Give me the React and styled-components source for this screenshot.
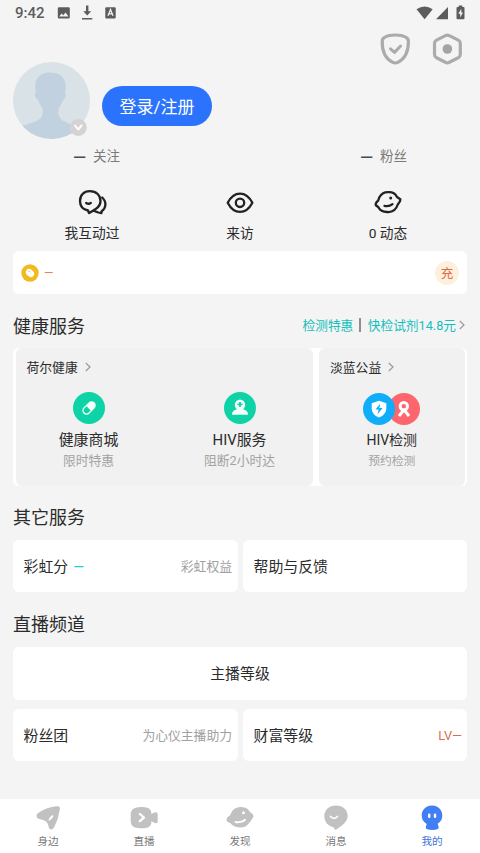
import React from "react";
import styled, { createGlobalStyle } from "styled-components";

const GlobalStyle = createGlobalStyle`
  * {
    box-sizing: border-box;
  }
  body {
    margin: 0;
    background-color: #f4f4f4;
    font-family: Roboto, "Noto Sans CJK SC", sans-serif;
    color: #2b2b2b;
  }
  svg {
    display: block;
    flex: none;
  }
`;

const Page = styled.div`
  width: 480px;
  height: 853px;
  display: flex;
  flex-direction: column;
  overflow: hidden;
  white-space: nowrap;
`;

const StatusBar = styled.div`
  height: 26px;
  padding: 0 15px;
  display: flex;
  align-items: center;
  justify-content: space-between;
  color: #5c5c5c;

  > div {
    display: flex;
    align-items: center;
  }
  .time {
    width: 42px;
    font-size: 15px;
    font-weight: 500;
    line-height: 26px;
  }
`;

const Header = styled.header`
  height: 113px;
  padding: 0 15px 0 13px;
  display: flex;
  justify-content: space-between;
`;

const Profile = styled.div`
  display: flex;
  align-items: flex-end;
  gap: 12px;
`;

const LoginButton = styled.button`
  width: 110px;
  height: 40px;
  margin-bottom: 13px;
  padding: 2px 0 0;
  border: none;
  border-radius: 20px;
  background-color: #2b73fd;
  color: #fff;
  font-family: inherit;
  font-size: 17px;
  line-height: 38px;
`;

const Actions = styled.div`
  display: flex;
  gap: 17px;
  padding-top: 5px;
`;

const Stats = styled.div`
  height: 34px;
  padding: 0 73px 2px;
  display: flex;
  justify-content: space-between;
  align-items: center;
  font-size: 13.5px;
  color: #7a7a7a;

  > div {
    display: flex;
    align-items: center;
    gap: 7px;
  }
  b {
    padding-top: 3px;
    font-size: 17px;
    line-height: 20px;
    font-weight: 500;
    color: #4b4b4b;
  }
`;

const Shortcuts = styled.div`
  height: 78px;
  padding: 13px 18px 0;
  display: grid;
  grid-template-columns: repeat(3, 1fr);
`;

const Shortcut = styled.div`
  display: flex;
  flex-direction: column;
  align-items: center;
  gap: 5px;
  font-size: 13.7px;
  line-height: 20px;
`;

const Wallet = styled.div`
  height: 43px;
  margin: 0 13px;
  padding: 0 8px;
  display: flex;
  align-items: center;
  background-color: #fff;
  border-radius: 6px;

  .amount {
    margin-left: 5px;
    font-size: 12px;
    color: #ee7a5d;
  }
`;

const Recharge = styled.span`
  width: 24px;
  height: 24px;
  margin-left: auto;
  border-radius: 50%;
  background-color: #fdf0dc;
  color: #db6a45;
  font-size: 12.5px;
  line-height: 25px;
  text-align: center;
`;

const SectionTitle = styled.div`
  height: ${(props) => props.$height}px;
  padding: ${(props) => props.$top}px 15px 0 13px;
  display: flex;
  align-items: center;
  justify-content: space-between;

  h2 {
    margin: 0;
    font-size: 18px;
    line-height: 26px;
    font-weight: 400;
  }
`;

const Promo = styled.div`
  padding-bottom: 4px;
  display: flex;
  align-items: center;
  font-size: 12.7px;
  color: #14bfbd;

  i {
    width: 1.5px;
    height: 14px;
    margin: 0 7px 0 6px;
    background-color: #8e8e8e;
  }
  svg {
    margin-left: 3px;
  }
`;

const HealthPanel = styled.div`
  height: 138px;
  margin: 0 13px;
  padding: 0 2.5px;
  display: grid;
  grid-template-columns: 297px 1fr;
  gap: 6.5px;
  background-color: #fff;
  border-radius: 6px;
`;

const HealthBox = styled.div`
  background-color: #f1f1f1;
  border-radius: 6px;

  .title {
    height: 38px;
    padding-left: 11px;
    display: flex;
    align-items: center;
    gap: 7px;
    font-size: 12.8px;
  }
  .title span {
    padding-bottom: 2px;
  }
`;

const Tiles = styled.div`
  display: flex;
  justify-content: center;
  gap: 11px;
  padding-top: ${(props) => props.$top}px;
`;

const Tile = styled.div`
  width: 140px;
  display: flex;
  flex-direction: column;
  align-items: center;

  .name {
    margin-top: 5px;
    font-size: ${(props) => (props.$small ? 14 : 14.9)}px;
    line-height: ${(props) => (props.$small ? 21 : 22)}px;
  }
  .desc {
    font-size: ${(props) => (props.$small ? 11.8 : 12.8)}px;
    line-height: 20px;
    color: #a3a3a3;
  }
`;

const CardRow = styled.div`
  margin: 0 13px ${(props) => props.$bottom || 0}px;
  display: grid;
  grid-template-columns: ${(props) => (props.$single ? "1fr" : "225px 1fr")};
  gap: 5px;
`;

const Card = styled.div`
  height: ${(props) => props.$height || 52}px;
  padding: ${(props) => (props.$center ? "0 0 2px" : "0 6px 2px 10.5px")};
  display: flex;
  align-items: center;
  justify-content: ${(props) => (props.$center ? "center" : "space-between")};
  background-color: #fff;
  border-radius: 6px;
  font-size: 14.9px;

  em {
    margin-left: 5px;
    font-style: normal;
    font-size: 14px;
    color: #22cfd0;
  }
`;

const Note = styled.span`
  font-size: 12.8px;
  color: ${(props) => props.$color || "#a0a0a0"};
`;

const Level = styled(Note)`
  padding-top: 2px;
  margin-right: -1px;
`;

const TabBar = styled.nav`
  height: 54px;
  margin-top: auto;
  display: grid;
  grid-template-columns: repeat(5, 1fr);
  background-color: #fff;
`;

const Tab = styled.div`
  padding-top: 4px;
  display: flex;
  flex-direction: column;
  align-items: center;
  font-size: 10.6px;
  line-height: 16px;
  color: ${(props) => (props.$active ? "#3f73d8" : "#777")};

  svg {
    margin-bottom: 1px;
  }
`;

const Chevron = () => (
  <svg width="6" height="10" viewBox="0 0 6 10" fill="none" stroke="#999" strokeWidth="1.2">
    <path d="M.8 1 5 5 .8 9" />
  </svg>
);

const StatusLeft = () => (
  <svg width="60" height="16" viewBox="0 0 60 16" fill="#5c5c5c">
    <path
      fillRule="evenodd"
      d="M2 2.200h9.600q1.200 0 1.200 1.200v8.800q0 1.200-1.200 1.200H2Q.8 13.400.8 12.200V3.400Q.8 2.200 2 2.200ZM2.200 11.500h9.300L8.600 7.400 6.200 10.300 4.600 8.500Z"
    />
    <path d="M29 .5h2.400v5.800h2.800l-4 4.200-4-4.200H29ZM25 13h10.300v1.600H25Z" />
    <rect x="48.300" y="2.200" width="10.400" height="11.200" rx="1" />
    <path d="m51 10.800 2.500-6.200 2.500 6.200M52 8.900h3" fill="none" stroke="#f4f4f4" strokeWidth="1.300" />
  </svg>
);

const StatusRight = () => (
  <svg width="50" height="16" viewBox="0 0 50 16" fill="#5c5c5c">
    <path d="M1.500 4.200Q9.600-1.200 17.700 4.200L9.600 14.200Z" />
    <path d="M33 2v12.200H21Z" />
    <path
      fillRule="evenodd"
      d="M43.700.5h3.600v1.600h1.200q1 0 1 1v10.200q0 1-1 1h-6q-1 0-1-1V3.100q0-1 1-1h1.200ZM46.300 3.800 43.300 8.800h1.900v3.800L48 7.500h-1.700Z"
    />
  </svg>
);

const Avatar = () => (
  <svg width="77" height="77" viewBox="0 0 77 77">
    <defs>
      <clipPath id="avatar">
        <circle cx="38.500" cy="38.500" r="38.500" />
      </clipPath>
    </defs>
    <g clipPath="url(#avatar)">
      <rect width="77" height="77" fill="#d9e2e7" />
      <path
        fill="#c2d1df"
        d="M22.500 35Q21 32 23 30C20 17 27 10 38 10.500C49 11 55 18 52 31Q54 33 51.500 36.500Q51 38 50 38C48 43 46 45 45.500 48C44 58 52 60 65 65V77H9V64C25 59 31 58 29.500 47C28 44 26 41 25 37.500Q23 37 22.500 35Z"
      />
    </g>
    <circle cx="65.300" cy="65.500" r="8.500" fill="#d5d2d5" />
    <path d="m62 63.500 3.200 4 3.400-4" fill="none" stroke="#fff" strokeWidth="2" strokeLinecap="round" strokeLinejoin="round" />
  </svg>
);

const ShieldIcon = () => (
  <svg width="35" height="36" viewBox="0 0 35 36" fill="none" stroke="#ababab" strokeLinecap="round" strokeLinejoin="round">
    <path strokeWidth="3.200" d="M17.300 4C12.500 4 8 5 5.600 7Q4.200 8.200 4.200 10.500C4 21 8 28 14.800 31.400Q17.300 32.600 19.800 31.400C26.500 28 30.500 21 30.400 10.500Q30.400 8.200 29 7C26.500 5 22 4 17.300 4Z" />
    <path strokeWidth="3" d="m12.500 17.800 4 3.600L22.600 15" />
  </svg>
);

const HexIcon = () => (
  <svg width="35" height="36" viewBox="0 0 35 36">
    <path
      fill="none"
      stroke="#ababab"
      strokeWidth="3.200"
      strokeLinejoin="round"
      d="M15.400 4.600Q17.300 3.500 19.300 4.600L28.300 9.100Q30.300 10.200 30.300 12.300V23.500Q30.300 25.700 28.300 26.800L19.300 31.300Q17.300 32.400 15.400 31.300L6.500 26.800Q4.500 25.700 4.500 23.500V12.300Q4.500 10.200 6.500 9.100Z"
    />
    <circle cx="17.400" cy="18" r="4.800" fill="#a4a4a4" />
  </svg>
);

const ShortcutIcon = ({ children }) => (
  <svg width="32" height="32" viewBox="0 0 32 32" fill="none" stroke="#222" strokeWidth="2.300" strokeLinecap="round" strokeLinejoin="round">
    {children}
  </svg>
);

const CoinIcon = () => (
  <svg width="18" height="18" viewBox="0 0 18 18">
    <circle cx="9" cy="9" r="8.700" fill="#f1ba20" />
    <g transform="rotate(42 9 9)">
      <ellipse cx="9" cy="9" rx="4.500" ry="3.500" fill="#fff" />
      <path d="m6.500 8.500 2-.5" stroke="#f1ba20" strokeWidth=".8" />
    </g>
  </svg>
);

const PillIcon = () => (
  <svg width="32" height="32" viewBox="0 0 32 32">
    <circle cx="16" cy="16" r="16" fill="#0ed3a6" />
    <g transform="rotate(-45 16 16)">
      <rect x="8.300" y="11.800" width="15.600" height="8.400" rx="4.200" fill="#f2fffb" />
      <path d="M15.500 13.100H12.500a2.900 2.900 0 0 0 0 5.800h3Z" fill="#0ed3a6" />
    </g>
  </svg>
);

const DoctorIcon = () => (
  <svg width="32" height="32" viewBox="0 0 32 32">
    <circle cx="16" cy="16" r="16" fill="#0ed3a6" />
    <path d="M8 22.800C8 19.500 10 18 12.900 17.300C11.600 16 10.800 14.300 10.800 12.700A5.200 5.200 0 0 1 21.200 12.700C21.200 14.300 20.400 16 19.100 17.300C22 18 24 19.500 24 22.800Z" fill="#f2fffb" />
    <path d="M16 9.900v5M13.500 12.400h5" stroke="#0ed3a6" strokeWidth="1.700" />
  </svg>
);

const TestIcon = () => (
  <svg width="57" height="32" viewBox="0 0 57 32">
    <circle cx="41" cy="16" r="16" fill="#fd666d" />
    <circle cx="40.800" cy="13.300" r="3.700" fill="none" stroke="#fff" strokeWidth="3" />
    <path d="m36 23 5-6.200 5 6.200" fill="none" stroke="#fff" strokeWidth="3" strokeLinejoin="round" />
    <circle cx="16" cy="16" r="16" fill="#10aefa" />
    <path d="M16 7.800 23.300 10.200V15C23.300 19.500 20.500 22.700 16 24.500C11.500 22.700 8.700 19.500 8.700 15V10.200Z" fill="#fff" />
    <path d="m17.300 10.500-4.800 6h3.100l-1 4.800 5-6.300h-3.300Z" fill="#10aefa" />
  </svg>
);

const TabIcon = ({ children }) => (
  <svg width="30" height="30" viewBox="0 0 30 30" fill="#c1c1c1">
    {children}
  </svg>
);

const tabs = [
  {
    label: "身边",
    icon: (
      <>
        <path d="M5.500 9.800Q14 4.200 23.500 3.300Q27.500 2.600 26.800 6.500Q25.500 16 21.300 24Q19.200 28.200 16 25.300Q15 20 12.800 18.300Q10 16.500 5.200 15.800Q1.500 13 5.500 9.800Z" />
        <path d="M16 17.300c.3-2 1.600-4 3.800-4.700-.2 1.900-1.500 3.800-3.800 4.700Z" fill="#fff" stroke="#fff" strokeWidth="1" />
      </>
    ),
  },
  {
    label: "直播",
    icon: (
      <>
        <path d="M9 4.300Q12.500 3.500 16 4.300Q21 4.600 22.300 9V11L26 9.300Q28.700 8.600 28.700 11.500V18Q28.700 21 26 20L22.300 18.300V20.500Q21 24.800 16 25Q12.500 25.500 9 25Q1.700 25 1.700 18V11.500Q1.700 5 9 4.300Z" />
        <path d="m10.800 11 4.200 3.600-4.200 3.600" fill="none" stroke="#fff" strokeWidth="2.300" strokeLinejoin="round" strokeLinecap="round" />
      </>
    ),
  },
  {
    label: "发现",
    icon: (
      <>
        <path d="M7.300 8C10 4.500 14 3.700 18 4.300C21.500 4.700 23.500 6.500 25 9L28 11.500Q29.200 13.300 27.500 15.500L24.500 19.500C21.500 24 17.500 25.300 13 24.300C9.500 24 7 22 5.300 20L2.500 19Q.8 16.500 2.200 14.500L4.800 12.500Z" />
        <circle cx="18.500" cy="9.800" r="1.500" fill="#fff" />
        <path d="M10.500 19c3 .7 7.500-.2 9.500-2.300" fill="none" stroke="#fff" strokeWidth="2" strokeLinecap="round" />
      </>
    ),
  },
  {
    label: "消息",
    icon: (
      <>
        <path d="M15 2.400C22 2.400 26.700 7 26.700 13C26.700 19 21 22.500 15.300 26.500Q13.200 27.300 12.900 24.400C7 23 3.300 19 3.300 13C3.300 7 8 2.400 15 2.400Z" />
        <path d="M9.500 13.500q3.500 3.700 7 0" fill="none" stroke="#fff" strokeWidth="1.800" strokeLinecap="round" />
      </>
    ),
  },
  {
    label: "我的",
    active: true,
    icon: (
      <>
        <path d="M15 2.600C21.200 2.600 25.300 7 25.300 12.600C25.300 16.500 23.500 19 20.600 20.800L21.800 24.200Q21.800 26.900 15.200 26.900Q8.500 26.900 8.700 24.200L9.700 20.900C6.500 19 4.700 16.500 4.700 12.600C4.700 7 8.800 2.600 15 2.600Z" fill="#427ff4" />
        <path d="M12.200 11.800v2M18 11.800v2" stroke="#fff" strokeWidth="2.400" strokeLinecap="round" />
      </>
    ),
  },
];

const App = () => {
  return (
    <Page>
      <GlobalStyle />
      <StatusBar>
        <div>
          <span className="time">9:42</span>
          <StatusLeft />
        </div>
        <StatusRight />
      </StatusBar>

      <Header>
        <Profile>
          <Avatar />
          <LoginButton>登录/注册</LoginButton>
        </Profile>
        <Actions>
          <ShieldIcon />
          <HexIcon />
        </Actions>
      </Header>

      <Stats>
        <div>
          <b>—</b>关注
        </div>
        <div>
          <b>—</b>粉丝
        </div>
      </Stats>

      <Shortcuts>
        <Shortcut>
          <ShortcutIcon>
            <path d="M26.200 11.500C31 16 30 22.500 25.700 25.200L25.300 27.200 22.300 26.500 17.500 24.700" />
            <path d="M14 5.200C20.500 5.200 24.500 9.500 24.500 15C24.500 21 19.500 23.300 13 27L12 24.500C7 23.500 4 20 4 15C4 9.500 7.500 5.200 14 5.200Z" fill="#f4f4f4" />
            <path d="M10.200 17q2.300 1.500 4.600 0" />
          </ShortcutIcon>
          我互动过
        </Shortcut>
        <Shortcut>
          <ShortcutIcon>
            <path d="M3.700 16.800C10 4.500 22 4.500 28.400 16.800C22 29 10 29 3.700 16.800Z" />
            <circle cx="16" cy="16.800" r="4.200" />
          </ShortcutIcon>
          来访
        </Shortcut>
        <Shortcut>
          <ShortcutIcon>
            <path d="M7.500 11C10 7 13 6 16.500 6.200C20.500 6 23.500 8 25 11L28.300 13.300C28.600 15 27.500 16.500 25.800 18.500C24 24 20 26.500 15 26C11 26 8 24.500 6.200 21L3.800 19.300C3.200 17 4.800 15.800 6 14.800Z" />
            <path d="M12.500 19.800q4.500 1 8-1.700" />
            <circle cx="18.700" cy="11.900" r="1.500" fill="#222" stroke="none" />
          </ShortcutIcon>
          0 动态
        </Shortcut>
      </Shortcuts>

      <Wallet>
        <CoinIcon />
        <span className="amount">—</span>
        <Recharge>充</Recharge>
      </Wallet>

      <SectionTitle $height={54} $top={11}>
        <h2>健康服务</h2>
        <Promo>
          检测特惠
          <i />
          快检试剂14.8元
          <Chevron />
        </Promo>
      </SectionTitle>
      <HealthPanel>
        <HealthBox>
          <div className="title">
            <span>荷尔健康</span>
            <Chevron />
          </div>
          <Tiles $top={6}>
            <Tile>
              <PillIcon />
              <span className="name">健康商城</span>
              <span className="desc">限时特惠</span>
            </Tile>
            <Tile>
              <DoctorIcon />
              <span className="name">HIV服务</span>
              <span className="desc">阻断2小时达</span>
            </Tile>
          </Tiles>
        </HealthBox>
        <HealthBox>
          <div className="title">
            <span>淡蓝公益</span>
            <Chevron />
          </div>
          <Tiles $top={7}>
            <Tile $small>
              <TestIcon />
              <span className="name">HIV检测</span>
              <span className="desc">预约检测</span>
            </Tile>
          </Tiles>
        </HealthBox>
      </HealthPanel>

      <SectionTitle $height={54} $top={9}>
        <h2>其它服务</h2>
      </SectionTitle>
      <CardRow>
        <Card>
          <span>
            彩虹分<em>—</em>
          </span>
          <Note>彩虹权益</Note>
        </Card>
        <Card>帮助与反馈</Card>
      </CardRow>

      <SectionTitle $height={55} $top={10}>
        <h2>直播频道</h2>
      </SectionTitle>
      <CardRow $single $bottom={9}>
        <Card $height={53} $center>
          主播等级
        </Card>
      </CardRow>
      <CardRow>
        <Card>
          粉丝团
          <Note>为心仪主播助力</Note>
        </Card>
        <Card>
          财富等级
          <Level $color="#da6e4e">LV—</Level>
        </Card>
      </CardRow>

      <TabBar>
        {tabs.map((tab) => (
          <Tab key={tab.label} $active={tab.active}>
            <TabIcon>{tab.icon}</TabIcon>
            {tab.label}
          </Tab>
        ))}
      </TabBar>
    </Page>
  );
};

export default App;
